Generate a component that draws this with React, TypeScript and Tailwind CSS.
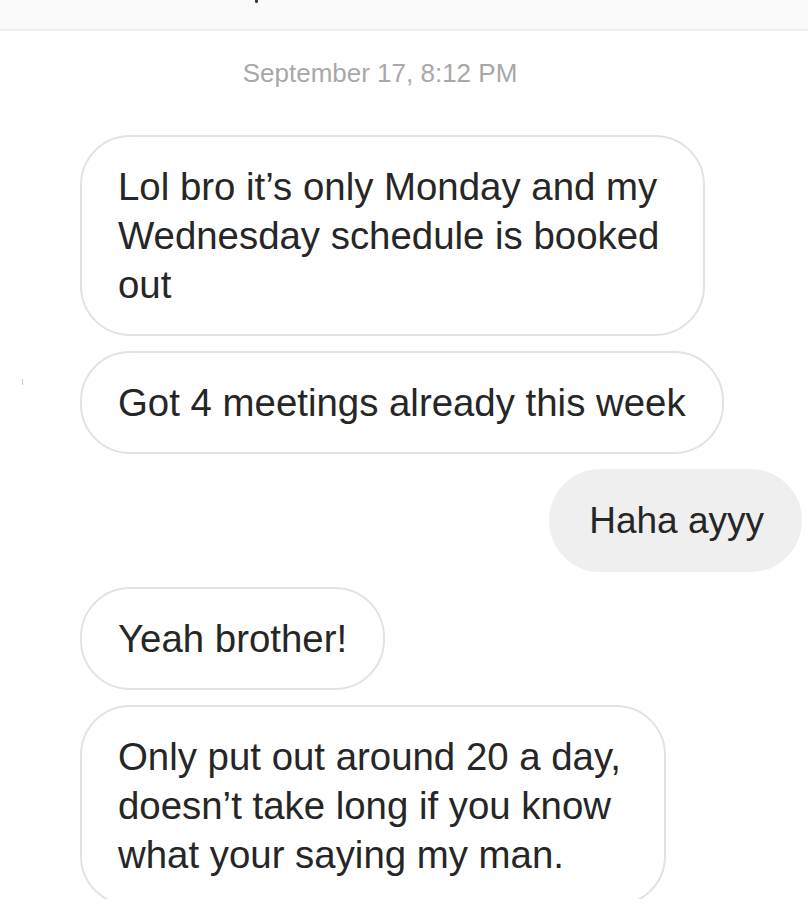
import React from "react";

type Msg = { id: number; mine?: boolean; lines: string[]; width?: string };

const messages: Msg[] = [
    { id: 1, lines: ["Lol bro it’s only Monday and my", "Wednesday schedule is booked", "out"], width: "w-[625px]" },
    { id: 2, lines: ["Got 4 meetings already this week"] },
    { id: 3, mine: true, lines: ["Haha ayyy"] },
    { id: 4, lines: ["Yeah brother!"] },
    { id: 5, lines: ["Only put out around 20 a day,", "doesn’t take long if you know", "what your saying my man."], width: "w-[586px]" },
];

function Bubble({ msg }: { msg: Msg }) {
    if (msg.mine) {
        return (
            <div className="flex justify-end pr-[6px]">
                <div className="rounded-full border-2 border-[#efefef] bg-[#efefef] pl-[38px] pr-[36px] py-[25px] text-[37px] leading-[49px] text-[#262626]">
                    {msg.lines[0]}
                </div>
            </div>
        );
    }
    return (
        <div className="flex pl-[80px]">
            <div className={`${msg.width ?? ""} rounded-[50px] border-2 border-[#e2e2e2] bg-white px-[36px] py-[25px] text-[38.4px] leading-[49px] text-[#262626]`}>
                {msg.lines.map((l, i) => (
                    <div key={i} className="whitespace-nowrap">{l}</div>
                ))}
            </div>
        </div>
    );
}

export default function App() {
    return (
        <div className="relative h-[922px] w-[808px] overflow-hidden bg-white font-['Liberation_Sans',Arial,sans-serif]">
            <header className="relative h-[31px] border-b-2 border-[#efefef] bg-[#fafafa]">
                <span className="absolute left-[255px] top-0 h-[3px] w-[3px] rounded-b-full bg-[#3a3a3a]" />
            </header>

            <div className="h-[868px] overflow-hidden">
                <div className="pt-[27px] pr-[48px] text-center text-[26px] leading-[30px] text-[#a8a8a8]">
                    September 17, 8:12 PM
                </div>

                <div className="mt-[47px] flex flex-col gap-[15px]">
                    {messages.map((m) => (
                        <Bubble key={m.id} msg={m} />
                    ))}
                </div>
            </div>

            <span className="absolute left-[22px] top-[379px] h-[6px] w-[1px] bg-[#cfcfcf]" />
        </div>
    );
}
